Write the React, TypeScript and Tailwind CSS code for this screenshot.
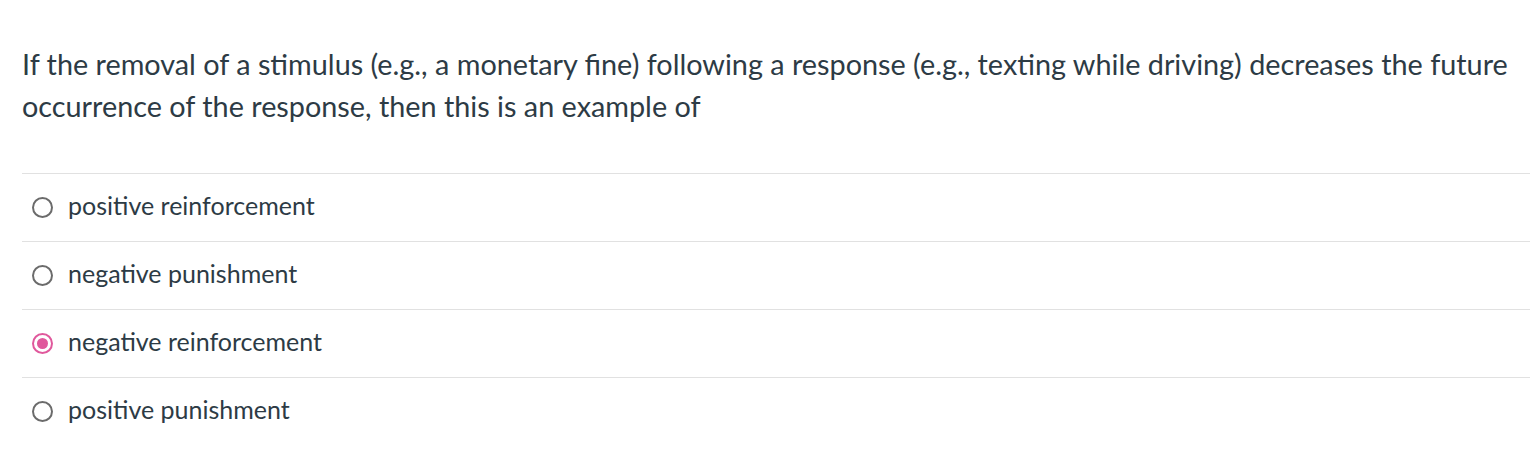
const options = [
  { label: "positive reinforcement", checked: false },
  { label: "negative punishment", checked: false },
  { label: "negative reinforcement", checked: true },
  { label: "positive punishment", checked: false },
];

function Radio({ checked }: { checked: boolean }) {
  if (checked) {
    return (
      <span className="flex h-[21px] w-[21px] shrink-0 items-center justify-center rounded-full border-2 border-[#e0589c]">
        <span className="h-[11px] w-[11px] rounded-full bg-[#e0589c]" />
      </span>
    );
  }
  return <span className="h-[21px] w-[21px] shrink-0 rounded-full border-2 border-[#6b6b6b]" />;
}

export default function App() {
  return (
    <div className="min-h-[460px] bg-white pl-[22px] pt-[43px] text-[#2d3b45] font-['Lato','Noto_Sans',sans-serif]">
      <p className="pr-4 text-[28.8px] leading-[42px]">
        If the removal of a stimulus (e.g., a monetary fine) following a response (e.g., texting while driving) decreases the future occurrence of the response, then this is an example of
      </p>

      <div className="mt-[46px]">
        {options.map((o) => (
          <label
            key={o.label}
            className="flex h-[68px] items-center gap-[15px] border-t border-[#e1e1e1] pl-[10px] text-[25px]"
          >
            <Radio checked={o.checked} />
            <span className="-mt-[3px]">{o.label}</span>
          </label>
        ))}
      </div>
    </div>
  );
}
